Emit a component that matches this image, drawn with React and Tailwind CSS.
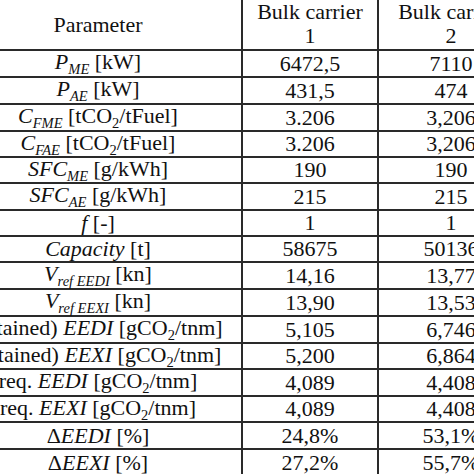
const Sub = ({ children }) => (
  <span className="align-[-5px] text-[14.5px] leading-none italic">{children}</span>
)

const I = ({ children }) => <span className="italic">{children}</span>

const CO2 = () => (
  <>
    CO<span className="align-[-5px] text-[14.5px] leading-none">2</span>
  </>
)

const rows = [
  { h: "h-[27px]", label: <><I>P</I><Sub>ME</Sub> [kW]</>, a: "6472,5", b: "7110" },
  { h: "h-[27px]", label: <><I>P</I><Sub>AE</Sub> [kW]</>, a: "431,5", b: "474" },
  { h: "h-[27px]", label: <><I>C</I><Sub>FME</Sub> [t<CO2 />/tFuel]</>, a: "3.206", b: "3,206" },
  { h: "h-[26px]", label: <><I>C</I><Sub>FAE</Sub> [t<CO2 />/tFuel]</>, a: "3.206", b: "3,206" },
  { h: "h-[26px]", label: <><I>SFC</I><Sub>ME</Sub> [g/kWh]</>, a: "190", b: "190" },
  { h: "h-[27px]", label: <><I>SFC</I><Sub>AE</Sub> [g/kWh]</>, a: "215", b: "215" },
  { h: "h-[26px]", label: <><I>f</I> [-]</>, a: "1", b: "1" },
  { h: "h-[26px]", label: <><I>Capacity</I> [t]</>, a: "58675", b: "50136" },
  { h: "h-[27px]", label: <><I>V</I><Sub>ref EEDI</Sub> [kn]</>, a: "14,16", b: "13,77" },
  { h: "h-[27px]", label: <><I>V</I><Sub>ref EEXI</Sub> [kn]</>, a: "13,90", b: "13,53" },
  { h: "h-[27px]", label: <>(attained) <I>EEDI</I> [g<CO2 />/tnm]</>, a: "5,105", b: "6,746" },
  { h: "h-[26px]", label: <>(attained) <I>EEXI</I> [g<CO2 />/tnm]</>, a: "5,200", b: "6,864" },
  { h: "h-[27px]", label: <>req. <I>EEDI</I> [g<CO2 />/tnm]</>, a: "4,089", b: "4,408" },
  { h: "h-[26px]", label: <>req. <I>EEXI</I> [g<CO2 />/tnm]</>, a: "4,089", b: "4,408" },
  { h: "h-[27px]", label: <>Δ<I>EEDI</I> [%]</>, a: "24,8%", b: "53,1%" },
  { h: "h-[27px]", label: <>Δ<I>EEXI</I> [%]</>, a: "27,2%", b: "55,7%" },
]

const Cell = ({ w, children, last }) => (
  <div
    className={`${w} shrink-0 flex items-center justify-center whitespace-nowrap ${last ? "" : "border-r-2 border-[#2a2a2a]"}`}
  >
    {children}
  </div>
)

export default function App() {
  return (
    <div className="w-[474px] h-[474px] overflow-hidden bg-white text-[#111] font-['Liberation_Serif',serif] text-[22px] leading-[24px]">
      <div className="ml-[-45px] w-[568px]">
        <div className="flex h-[51px] border-b-2 border-[#2a2a2a]">
          <Cell w="w-[288px]">Parameter</Cell>
          <Cell w="w-[136px]">
            <div className="text-center pb-[2px]">Bulk carrier<br />1</div>
          </Cell>
          <Cell w="w-[144px]" last>
            <div className="text-center pb-[2px]">Bulk carrier<br />2</div>
          </Cell>
        </div>
        {rows.map((r, i) => (
          <div key={i} className={`flex ${r.h} border-b-2 border-[#2a2a2a]`}>
            <Cell w="w-[288px]"><span>{r.label}</span></Cell>
            <Cell w="w-[136px]">{r.a}</Cell>
            <Cell w="w-[144px]" last>{r.b}</Cell>
          </div>
        ))}
      </div>
    </div>
  )
}
